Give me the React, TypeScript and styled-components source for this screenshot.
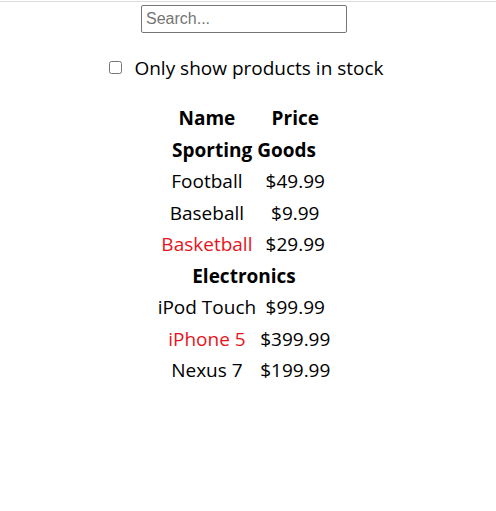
import React from "react";
import styled, { createGlobalStyle } from "styled-components";

const Global = createGlobalStyle`
  html, body { margin: 0; padding: 0; background: #fff; }
  body { font-family: "Open Sans", "Noto Sans", sans-serif; color: #000; }
`;

const Page = styled.div`
  border-top: 1px solid #dcdcdc;
  margin-top: 1px;
  display: flex;
  flex-direction: column;
  align-items: center;
  padding-top: 3px;
  padding-right: 8px;
`;

const SearchInput = styled.input`
  box-sizing: border-box;
  width: 206px;
  height: 28px;
  border: 1px solid #767676;
  border-radius: 2px;
  padding: 1px 4px;
  font-family: "Liberation Sans", Arial, sans-serif;
  font-size: 16px;
  &::placeholder { color: #757575; }
`;

const StockLabel = styled.label`
  display: flex;
  align-items: center;
  gap: 10px;
  margin-top: 22px;
  margin-left: 5px;
  font-size: 19px;
  line-height: 26px;
`;

const Check = styled.input`
  width: 13px;
  height: 13px;
  margin: 0 2px 1px 0;
`;

const Table = styled.table`
  margin-top: 21px;
  border-spacing: 2px;
  font-size: 19px;
`;

const HeadCell = styled.th`
  padding: 1px;
  line-height: 27.5px;
  font-weight: 700;
`;

const Cell = styled.td<{ $red?: boolean }>`
  padding: 1px;
  line-height: 27.5px;
  text-align: center;
  color: ${(p) => (p.$red ? "#e8141c" : "#000")};
`;

type Product = { name: string; price: string; stocked: boolean };
const groups: { category: string; items: Product[] }[] = [
  {
    category: "Sporting Goods",
    items: [
      { name: "Football", price: "$49.99", stocked: true },
      { name: "Baseball", price: "$9.99", stocked: true },
      { name: "Basketball", price: "$29.99", stocked: false },
    ],
  },
  {
    category: "Electronics",
    items: [
      { name: "iPod Touch", price: "$99.99", stocked: true },
      { name: "iPhone 5", price: "$399.99", stocked: false },
      { name: "Nexus 7", price: "$199.99", stocked: true },
    ],
  },
];

export default function App() {
  return (
    <>
      <Global />
      <Page>
        <SearchInput type="text" placeholder="Search..." />
        <StockLabel>
          <Check type="checkbox" />
          Only show products in stock
        </StockLabel>
        <Table>
          <thead>
            <tr>
              <HeadCell>Name</HeadCell>
              <HeadCell>Price</HeadCell>
            </tr>
          </thead>
          <tbody>
            {groups.map((g) => (
              <React.Fragment key={g.category}>
                <tr>
                  <HeadCell colSpan={2}>{g.category}</HeadCell>
                </tr>
                {g.items.map((p) => (
                  <tr key={p.name}>
                    <Cell $red={!p.stocked}>{p.name}</Cell>
                    <Cell>{p.price}</Cell>
                  </tr>
                ))}
              </React.Fragment>
            ))}
          </tbody>
        </Table>
      </Page>
    </>
  );
}
